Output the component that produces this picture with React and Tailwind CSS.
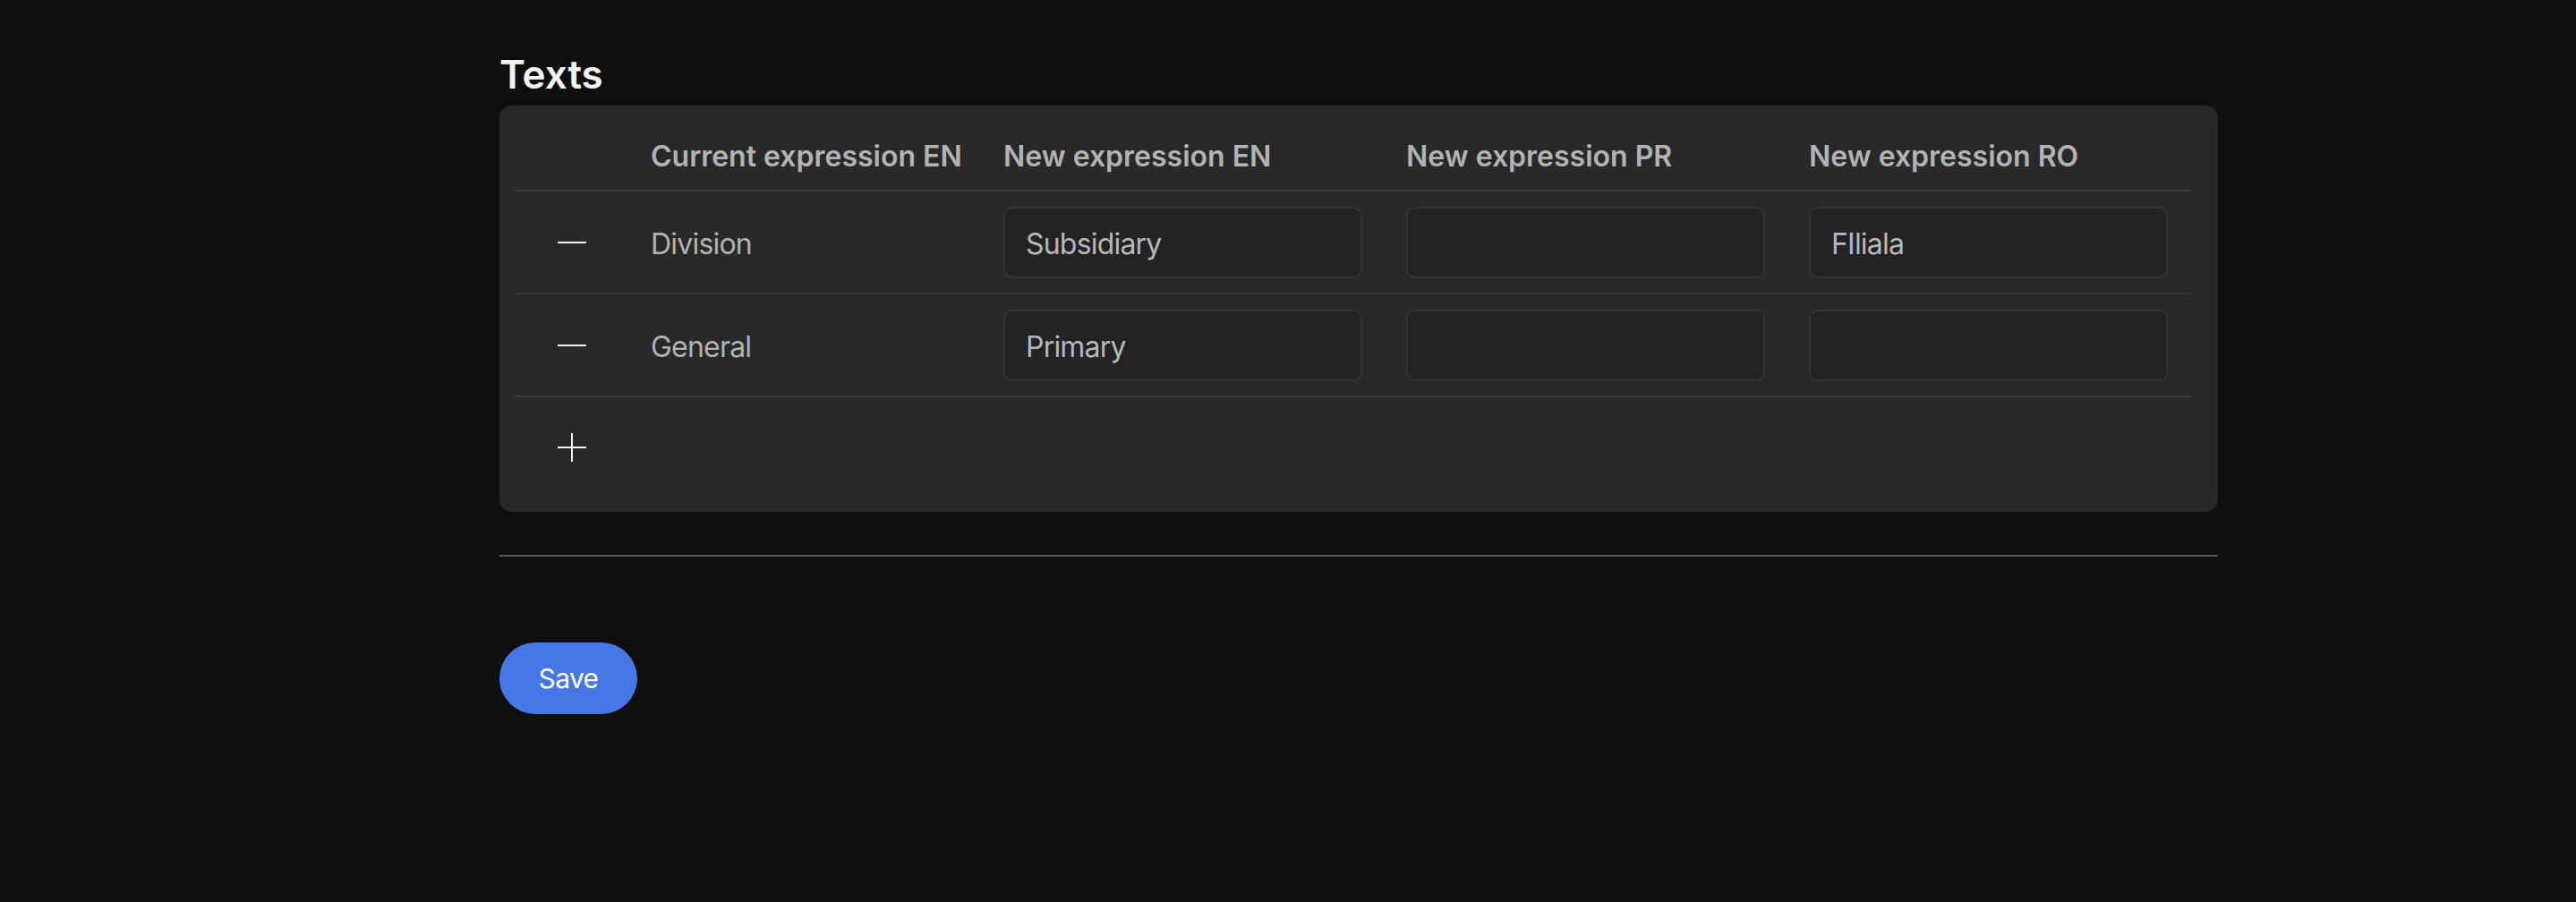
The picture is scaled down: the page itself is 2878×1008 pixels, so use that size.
import { useState } from "react";

const rows = [
  { id: 1, current: "Division", en: "Subsidiary", pr: "", ro: "FIliala" },
  { id: 2, current: "General", en: "Primary", pr: "", ro: "" },
];

const cols = "grid grid-cols-[129px_394px_450px_450px_450px]";

function MinusIcon() {
  return (
    <svg width="32" height="32" viewBox="0 0 32 32" className="text-[#f0f0f0]">
      <line x1="0" y1="16" x2="32" y2="16" stroke="currentColor" strokeWidth="2" />
    </svg>
  );
}

function PlusIcon() {
  return (
    <svg width="32" height="32" viewBox="0 0 32 32" className="text-[#f0f0f0]">
      <line x1="0" y1="16" x2="32" y2="16" stroke="currentColor" strokeWidth="2" />
      <line x1="16" y1="0" x2="16" y2="32" stroke="currentColor" strokeWidth="2" />
    </svg>
  );
}

function Field({ value, onChange }) {
  return (
    <input
      value={value}
      onChange={(e) => onChange(e.target.value)}
      className="w-[401px] h-[80px] rounded-[10px] border-2 border-[#333333] bg-[#232323] px-[23px] pt-[3px] text-[32px] tracking-[-0.025em] text-[#b8b8b8] outline-none"
    />
  );
}

export default function App() {
  const [items, setItems] = useState(rows);

  function update(id, key, val) {
    setItems((prev) => prev.map((r) => (r.id === id ? { ...r, [key]: val } : r)));
  }

  return (
    <div className="min-h-[1008px] bg-[#0f0f0f] pl-[558px] pt-[61px] font-['Inter',sans-serif]">
      <div className="w-[1920px]">
        <h2 className="text-[44px] leading-none font-semibold text-[#f2f2f2] mb-[13px]">Texts</h2>

        <div className="rounded-[14px] bg-[#292929] pl-4 pr-[31px] pt-4 pb-4">
          <div className={`${cols} h-[80px] pt-1 items-center border-b-2 border-[#363636] text-[32px] font-semibold whitespace-nowrap text-[#b3b3b3]`}>
            <div />
            <div className="px-6">Current expression EN</div>
            <div className="px-6">New expression EN</div>
            <div className="px-6">New expression PR</div>
            <div className="px-6">New expression RO</div>
          </div>

          {items.map((r) => (
            <div key={r.id} className={`${cols} h-[115px] items-center border-b-2 border-[#363636] text-[32px] tracking-[-0.025em] text-[#b3b3b3]`}>
              <button
                onClick={() => setItems((prev) => prev.filter((x) => x.id !== r.id))}
                className="flex justify-center"
              >
                <MinusIcon />
              </button>
              <div className="px-6 pt-1">{r.current}</div>
              <div className="px-6">
                <Field value={r.en} onChange={(v) => update(r.id, "en", v)} />
              </div>
              <div className="px-6">
                <Field value={r.pr} onChange={(v) => update(r.id, "pr", v)} />
              </div>
              <div className="px-6">
                <Field value={r.ro} onChange={(v) => update(r.id, "ro", v)} />
              </div>
            </div>
          ))}

          <div className={`${cols} h-[112px] items-center`}>
            <button
              onClick={() =>
                setItems((prev) => [...prev, { id: Date.now(), current: "", en: "", pr: "", ro: "" }])
              }
              className="flex justify-center"
            >
              <PlusIcon />
            </button>
          </div>
        </div>

        <div className="mt-[48px] h-[2px] bg-[#575757]" />

        <button className="mt-[96px] w-[154px] h-[80px] rounded-full bg-[#4577e6] text-[30px] tracking-[-0.02em] text-white">
          Save
        </button>
      </div>
    </div>
  );
}
